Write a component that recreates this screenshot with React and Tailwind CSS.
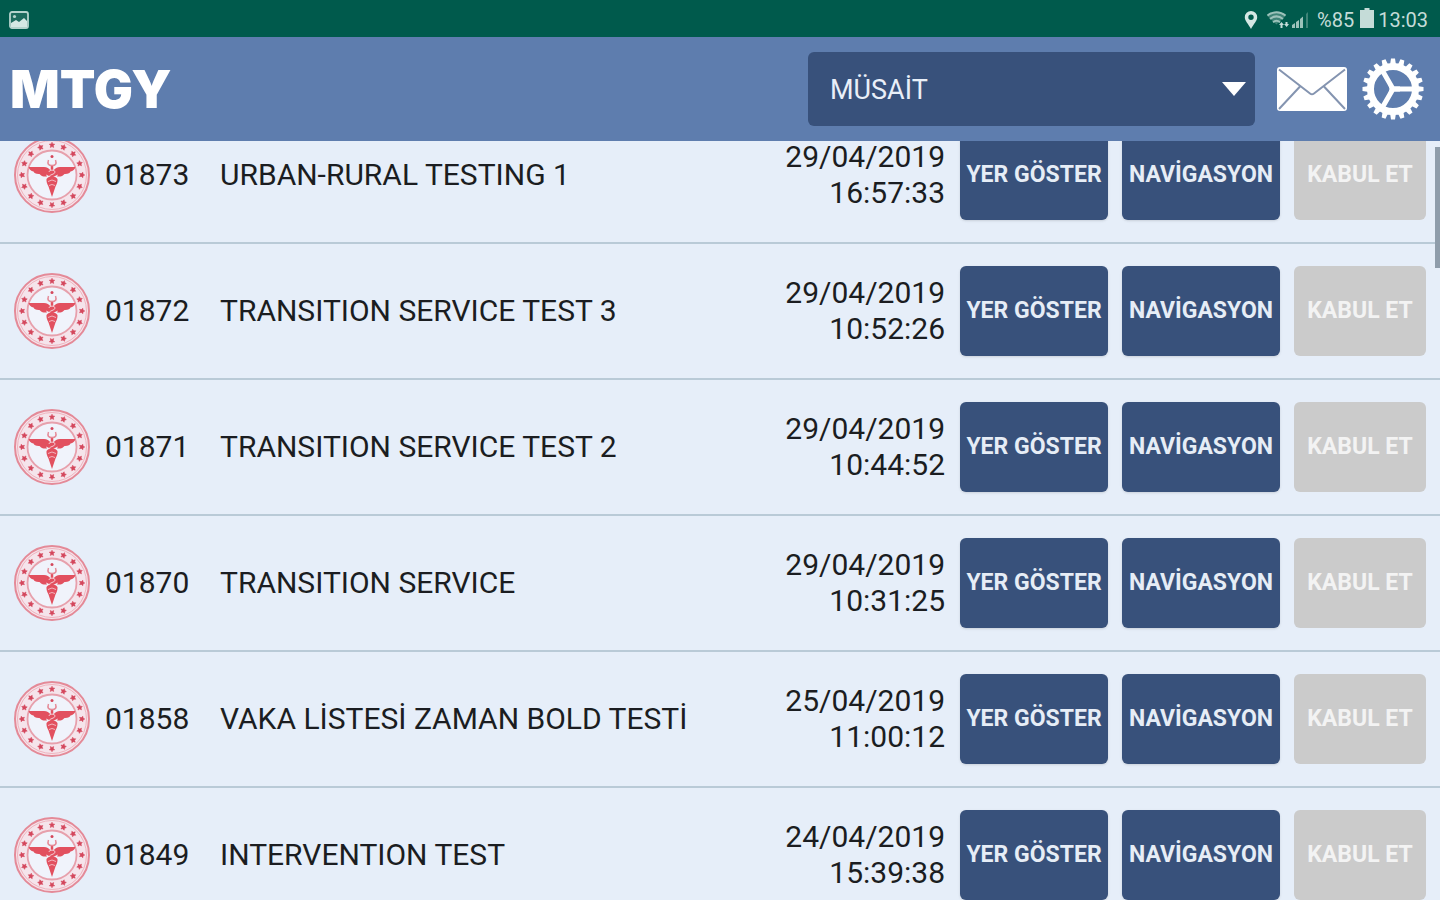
const cases = [
  { id: '01873', name: 'URBAN-RURAL TESTING 1', date: '29/04/2019', time: '16:57:33' },
  { id: '01872', name: 'TRANSITION SERVICE TEST 3', date: '29/04/2019', time: '10:52:26' },
  { id: '01871', name: 'TRANSITION SERVICE TEST 2', date: '29/04/2019', time: '10:44:52' },
  { id: '01870', name: 'TRANSITION SERVICE', date: '29/04/2019', time: '10:31:25' },
  { id: '01858', name: 'VAKA LİSTESİ ZAMAN BOLD TESTİ', date: '25/04/2019', time: '11:00:12' },
  { id: '01849', name: 'INTERVENTION TEST', date: '24/04/2019', time: '15:39:38' },
]

const STARS = Array.from({ length: 16 }, (_, i) => i * 22.5)
const TEETH = Array.from({ length: 20 }, (_, i) => i * 18)

function Seal() {
  return (
    <svg viewBox="0 0 78 78" className="size-[78px] shrink-0" aria-hidden="true">
      <circle cx="39" cy="39" r="37" fill="#f5e4eb" stroke="#e48a98" strokeWidth="2" />
      <circle cx="39" cy="39" r="34.500" fill="none" stroke="#efb3be" strokeWidth="1" />
      <circle cx="39" cy="39" r="24.500" fill="#f0f3fb" stroke="#e7a0ac" strokeWidth="1.800" />
      {STARS.map((a) => (
        <path
          key={a}
          transform={`rotate(${a} 39 39)`}
          d="M39 6.200l.9 1.700 1.900.3-1.400 1.400.3 1.900-1.700-.9-1.700.9.3-1.900-1.400-1.400 1.900-.3z"
          fill="#d4475c"
          stroke="#d4475c"
          strokeWidth=".5"
        />
      ))}
      {/* kanatlar */}
      <path d="M15.500 31H31c3 0 5 1.300 7 4.200V41l-5-2.500 1 2c-3.500.5-6-.6-7.500-2.500-3.500.2-5.500-1-6-2.500-2.500-.5-4.200-2-5-4.500z" fill="#e2505f" />
      <path d="M62.500 31H47c-3 0-5 1.300-7 4.200V41l5-2.500-1 2c3.500.5 6-.6 7.500-2.500 3.500.2 5.500-1 6-2.500 2.500-.5 4.200-2 5-4.500z" fill="#e2505f" />
      {/* asa ve yılan */}
      <path d="M33.500 43c1.500-2 3-2.600 5.500-2.600s4 .6 5.500 2.600c.3 3-.8 5-2 7.500L39 61l-3.500-10.500c-1.200-2.500-2.300-4.500-2-7.500z" fill="#e2505f" />
      <path d="M35 45.500q4-3 8 0M36 49.500q3-2 6 0" fill="none" stroke="#f3b5be" strokeWidth="1" />
      <path d="M39 29v14" stroke="#e2505f" strokeWidth="2.500" />
      <path d="M35.500 24c-1.500 4 0 5.500 3.500 5.500s5-1.500 3.500-5.500" fill="none" stroke="#e58b98" strokeWidth="1.500" />
      <path d="M36 36c0-2.500 6-2.500 6 0s-6 2.500-6 5" fill="none" stroke="#f6cdd4" strokeWidth="1" />
      <circle cx="39" cy="20.500" r="1.500" fill="#d4475c" />
    </svg>
  )
}

function Gear() {
  return (
    <svg viewBox="0 0 64 64" className="size-16" aria-hidden="true">
      {TEETH.map((a) => (
        <path key={a} transform={`rotate(${a} 32 32)`} d="M29 8l1-6.500h4l1 6.500z" fill="#fff" />
      ))}
      <circle cx="32" cy="32" r="22.500" fill="none" stroke="#fff" strokeWidth="7" />
      <path d="M32 32h21M32 32L21.500 13.800M32 32L21.500 50.200" stroke="#fff" strokeWidth="5" />
      <path d="M27 26l5.500 3.500H39v5h-6.500L27 38l1.500-6z" fill="#fff" />
    </svg>
  )
}

function Envelope() {
  return (
    <svg viewBox="0 0 70 44" className="h-11 w-[70px]" aria-hidden="true">
      <rect width="70" height="44" rx="3" fill="#fff" />
      <path d="M2 2.500l31 24q2 1.500 4 0l31-24M2 42l21-22.500M68 42L47 19.500" fill="none" stroke="#8494b0" strokeWidth="2" />
    </svg>
  )
}

function StatusBar() {
  return (
    <div className="flex h-[37px] shrink-0 items-center justify-between bg-[#005a4c] pt-0.5 pr-3 pl-[9px] text-[#c5dcd8]">
      <svg viewBox="0 0 20 18" className="h-[18px] w-5" aria-hidden="true">
        <rect x="1" y="1" width="18" height="16" rx="2" fill="#1d6b5e" stroke="#b5d3cd" strokeWidth="1.800" />
        <path d="M2 16v-4l5-3 3 2 5-4 3 3v6z" fill="#d5e8e4" />
        <circle cx="5.500" cy="5.500" r="1.600" fill="#b5d3cd" />
      </svg>
      <div className="flex items-center">
        <svg viewBox="0 0 14 20" className="mr-2 h-5 w-[14px]" aria-hidden="true">
          <path fillRule="evenodd" d="M7 1a6.200 6.200 0 0 0-6.200 6.200C.8 11 4.500 14 7 19c2.500-5 6.200-8 6.200-11.800A6.200 6.200 0 0 0 7 1zm0 3.500a2.700 2.700 0 1 1 0 5.400 2.700 2.700 0 0 1 0-5.400z" fill="#d5e8e4" />
        </svg>
        <svg viewBox="0 0 24 20" className="mr-px h-5 w-6" aria-hidden="true">
          <path d="M.8 5.500c5.500-5 13.900-5 19.400 0L12 13l-1.500 1.500z" fill="#3f8377" />
          <path d="M1.500 5.500c5.500-4.500 12.500-4.500 18 0M4 9c4-3.200 9-3.200 13 0M7 12.200c2.300-1.800 4.700-1.800 7 0" fill="none" stroke="#9cc2ba" strokeWidth="2" />
          <path d="M13 15l2.500-3 2.500 3h-1.500v3h-2v-3zM18 14h1.500v-2h2v2H23l-2.300 3z" fill="#c5dcd8" />
        </svg>
        <svg viewBox="0 0 20 20" className="mr-1.5 h-5 w-5" aria-hidden="true">
          <path d="M1 18v-3l3-2v5zM5 18v-6l3-2v8zM9 18V9l3-2.500V18z" fill="#9cc2ba" />
          <path d="M15 18V4l2-2v16z" fill="#3f8377" />
        </svg>
        <span className="text-[20px] leading-6">%85</span>
        <svg viewBox="0 0 14 20" className="mr-1 ml-1.5 h-5 w-[14px] self-start" aria-hidden="true">
          <path d="M4.500 0h5v2H14v18H0V2h4.500z" fill="#c5dcd8" />
        </svg>
        <span className="text-[20px] leading-6">13:03</span>
      </div>
    </div>
  )
}

function Header() {
  return (
    <header className="flex h-[104px] shrink-0 items-center bg-[#5e7dae] pr-[15px] pl-[10px]">
      <h1 className="grow pt-0.5 font-['Inter',sans-serif] text-[52px] leading-none font-black text-white">MTGY</h1>
      <div className="relative w-[447px]">
        <select
          aria-label="Durum"
          defaultValue="musait"
          className="h-[74px] w-full appearance-none rounded-md bg-[#38517b] pt-0.5 pr-12 pl-[22px] text-[27px] text-[#e9eff8] outline-none"
        >
          <option value="musait">MÜSAİT</option>
        </select>
        <svg viewBox="0 0 24 14" className="pointer-events-none absolute top-[30px] right-[9px] h-[14px] w-6" aria-hidden="true">
          <path d="M0 0h24L12 14z" fill="#fff" />
        </svg>
      </div>
      <button aria-label="Mesajlar" className="ml-[22px]">
        <Envelope />
      </button>
      <button aria-label="Ayarlar" className="ml-[14px]">
        <Gear />
      </button>
    </header>
  )
}

function CaseRow({ item }) {
  return (
    <li className="flex h-[136px] items-center border-b-2 border-[#b9cad7] pr-[14px] pl-[13px]">
      <Seal />
      <span className="ml-[14px] w-[115px] shrink-0">{item.id}</span>
      <span className="grow">{item.name}</span>
      <span className="w-[170px] shrink-0 text-right">
        {item.date}
        <br />
        {item.time}
      </span>
      <div className="ml-[15px] flex shrink-0 gap-[14px] text-[23px] font-bold whitespace-nowrap">
        <button className="h-[90px] w-[148px] rounded-md bg-[#38517b] text-[#e6edf6] shadow-sm">YER GÖSTER</button>
        <button className="h-[90px] w-[158px] rounded-md bg-[#38517b] text-[#e6edf6] shadow-sm">NAVİGASYON</button>
        <button disabled className="h-[90px] w-[132px] rounded-md bg-[#cbcbcb] text-[#f3f3f3]">KABUL ET</button>
      </div>
    </li>
  )
}

export default function App() {
  return (
    <div className="flex h-screen flex-col overflow-hidden bg-[#e6eef9] font-['Roboto',sans-serif] text-[#1b1d21]">
      <StatusBar />
      <Header />
      <main className="relative grow overflow-hidden">
        <ul className="-mt-[33px] text-[30px] leading-9">
          {cases.map((item) => (
            <CaseRow key={item.id} item={item} />
          ))}
        </ul>
        <div className="absolute top-1.5 right-0 h-[121px] w-[5px] bg-[#8f9dab]" />
      </main>
    </div>
  )
}
